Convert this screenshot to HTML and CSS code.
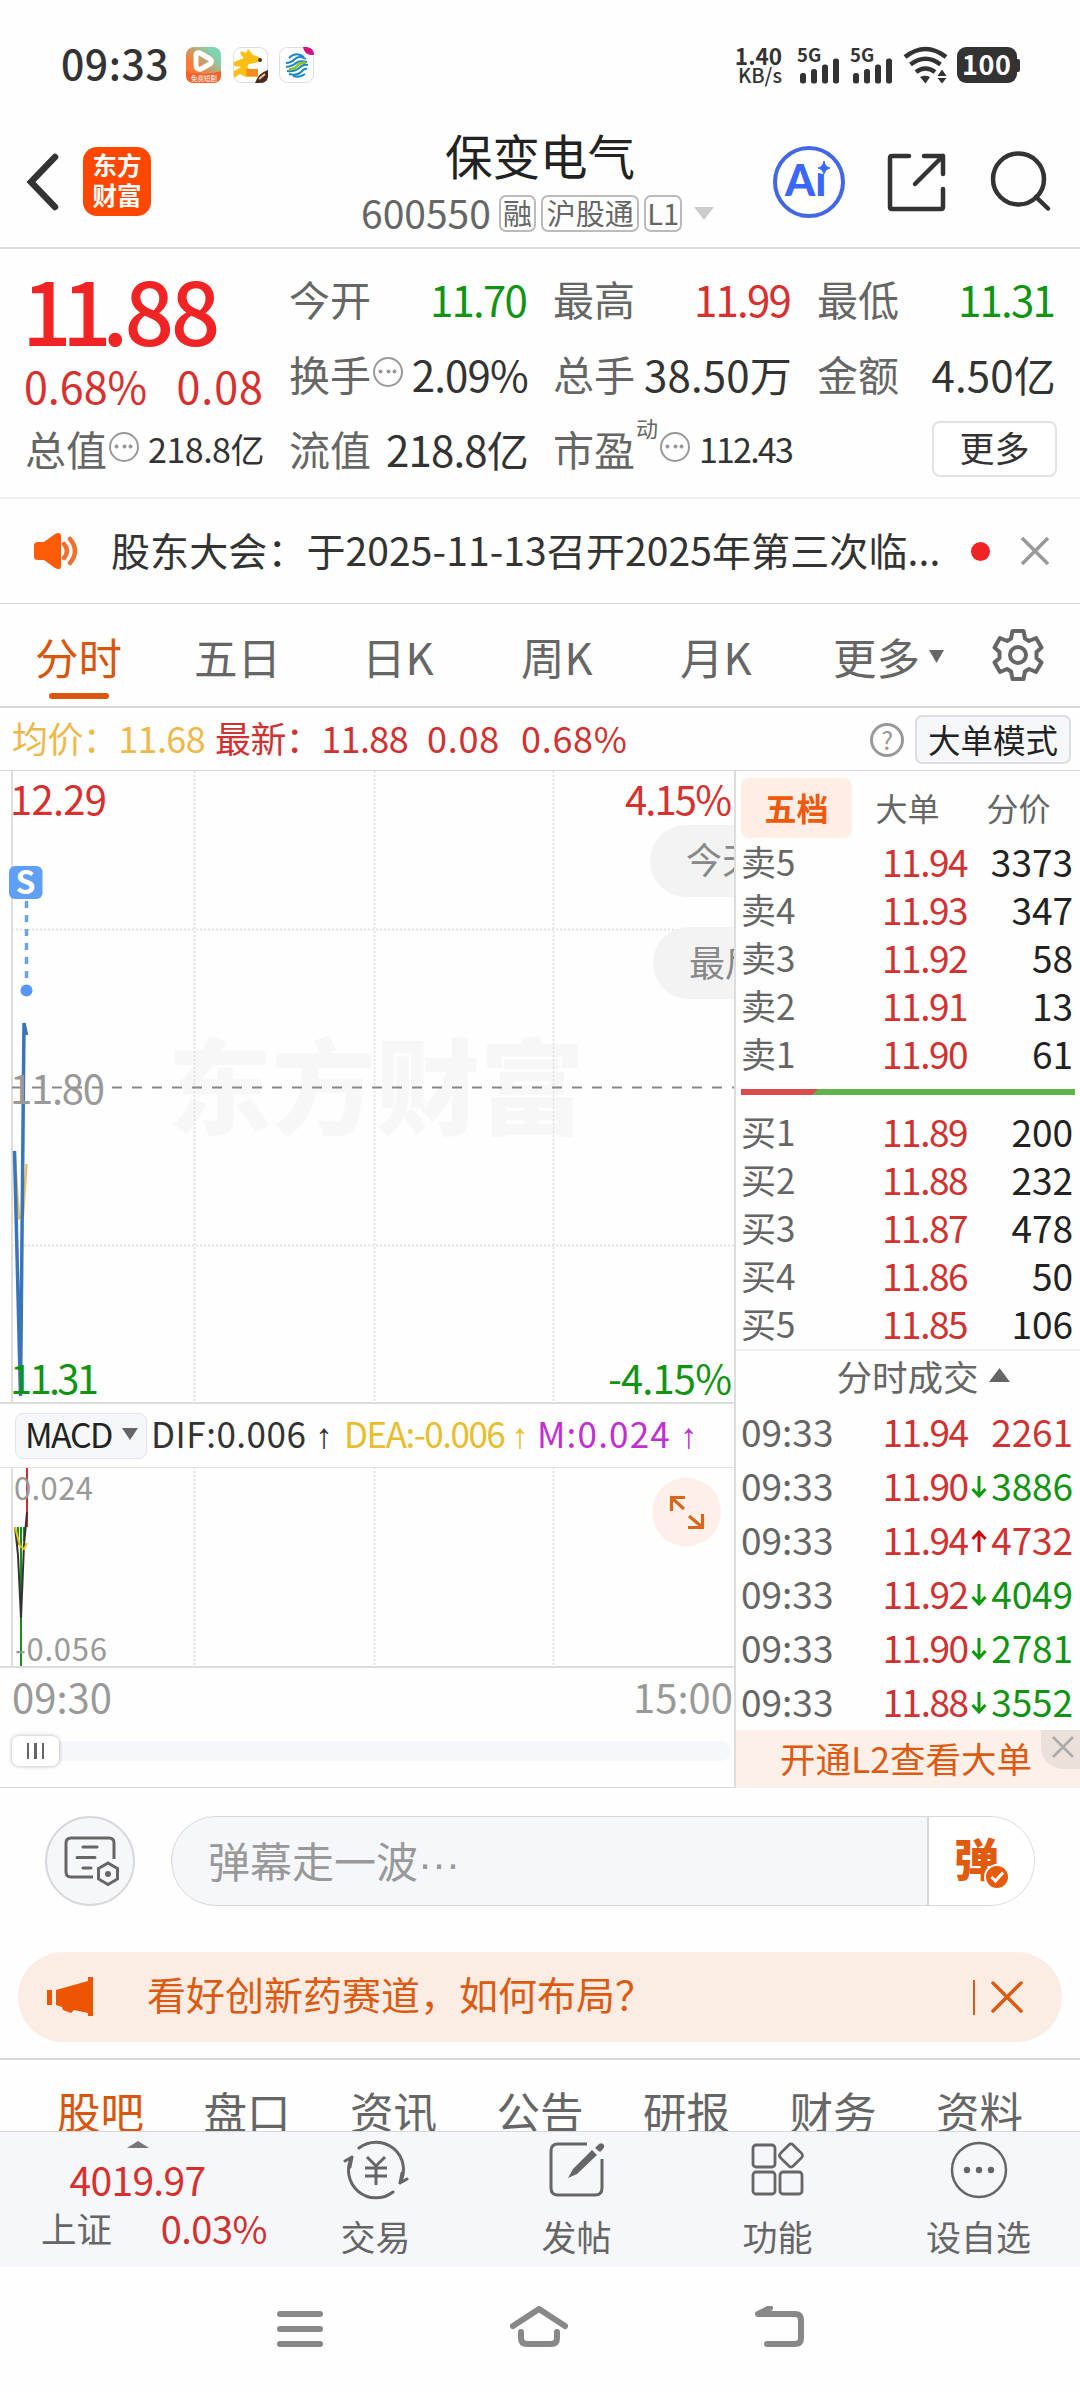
FILE: index.html
```html
<!DOCTYPE html>
<html lang="zh-CN">
<head>
    <meta charset="UTF-8">
    <meta name="viewport" content="width=device-width, initial-scale=1.0">
    <title>保变电气 600550</title>
    <link rel="stylesheet" href="styles.css">
</head>
<body>
    <!-- Status bar -->
    <div class="status">
        <span class="clock">09:33</span>
        <svg class="apps" width="130" height="36" viewBox="0 0 130 36">
            <defs>
                <linearGradient id="play" x1="0" y1="1" x2="1" y2="0">
                    <stop offset="0.35" stop-color="#fb7a35"/>
                    <stop offset="0.8" stop-color="#7fd3b0"/>
                </linearGradient>
            </defs>
            <rect x="0" y="0" width="35" height="36" rx="8" fill="url(#play)"/>
            <path d="M0 24Q17 30 35 24V28Q35 36 27 36H8Q0 36 0 28Z" fill="#f4622c"/>
            <path d="M10 8Q10 5 14 6L24 12Q27 14 24 17L15 22Q11 23 10 19Z" fill="none" stroke="#fff" stroke-width="5" stroke-linejoin="round"/>
            <text x="5" y="34" font-size="6.500" fill="#fff">免费短剧</text>
            <rect x="47.500" y="0.500" width="34" height="35" rx="8" fill="#fff" stroke="#ddd"/>
            <path d="M48 15L58 11Q53 7 55 4L60 6 62 2 67 8 73 10 75 14 69 16 63 17Q60 20 63 22H72V30H60L54 27 48 31V24L55 20 48 19Z" fill="#fbbf14"/>
            <path d="M60 22H72V29H61Z" fill="#f58a1f"/>
            <circle cx="74" cy="13" r="2" fill="#432"/>
            <path d="M69 36Q72 26 82 23V30Q81 36 74 36Z" fill="#4a2a1c"/>
            <path d="M73 32L79 27" stroke="#e8c9a0" stroke-width="2"/>
            <rect x="93.500" y="0.500" width="34" height="35" rx="8" fill="#fff" stroke="#ddd"/>
            <g fill="none" stroke="#1c86c8" stroke-width="2">
                <path d="M103 11Q110 4 118 10M100 16Q105 16 109 12T120 12M100 20Q107 19 110 16T121 15"/>
                <path d="M101 24Q109 25 113 21T122 18M103 27Q111 29 115 25T121 22M107 29Q114 31 119 27"/>
            </g>
            <path d="M103 22Q108 23 111 19T120 16" fill="none" stroke="#8ec31f" stroke-width="2.500"/>
            <path d="M117 0H121Q128 1 128 8H125Q118 7 117 0Z" fill="#d4117e"/>
        </svg>
        <div class="status-right">
            <div class="speed"><b>1.40</b><span>KB/s</span></div>
            <svg class="signals" width="224" height="40" viewBox="797 45 224 40">
                <g fill="#333">
                    <text x="797" y="61.500" font-size="18.500" font-weight="700">5G</text>
                    <rect x="800" y="73" width="6" height="10.500" rx="2.500"/>
                    <rect x="811" y="69" width="6" height="14.500" rx="2.500"/>
                    <rect x="822" y="64.500" width="6" height="19" rx="2.500"/>
                    <rect x="833" y="58.500" width="6" height="25" rx="2.500"/>
                    <text x="850" y="61.500" font-size="18.500" font-weight="700">5G</text>
                    <rect x="853" y="73" width="6" height="10.500" rx="2.500"/>
                    <rect x="864" y="69" width="6" height="14.500" rx="2.500"/>
                    <rect x="875" y="64.500" width="6" height="19" rx="2.500"/>
                    <rect x="886" y="58.500" width="6" height="25" rx="2.500"/>
                    <path d="M920 77Q925 74.500 930 77L925.500 83.500Z"/>
                    <path d="M937.500 76L942 69.500 946.500 76ZM937.500 78H946.500L942 83.500Z"/>
                    <rect x="957" y="47" width="60" height="36" rx="9"/>
                    <rect x="1015" y="59" width="5" height="13" rx="2"/>
                </g>
                <path d="M905 57Q925.500 41 946 57M910.500 64.500Q925.500 53 940.500 64.500M916 72Q925.500 65 935 72" fill="none" stroke="#333" stroke-width="4.500"/>
                <text x="962" y="75" font-size="27" font-weight="700" fill="#fff" textLength="49">100</text>
            </svg>
        </div>
    </div>

    <!-- Title bar -->
    <header class="header">
        <svg class="back" width="34" height="58" viewBox="0 0 34 58"><path d="M29 4L5 29 29 54" fill="none" stroke="#333" stroke-width="6.500" stroke-linecap="round"/></svg>
        <div class="logo"><span>东方</span><span>财富</span></div>
        <div class="title">
            <h1>保变电气</h1>
            <div class="code">
                <span class="code-num">600550</span>
                <span class="tag">融</span>
                <span class="tag tag-wide">沪股通</span>
                <span class="tag">L1</span>
                <svg width="22" height="15" viewBox="0 0 22 15"><path d="M1 1H21L11 14Z" fill="#ccc"/></svg>
            </div>
        </div>
        <svg class="actions" width="280" height="74" viewBox="772 145 280 74">
            <circle cx="809" cy="182" r="34" fill="#fff" stroke="#4468e4" stroke-width="4"/>
            <text class="ai" x="785" y="196">Ai</text>
            <circle cx="823" cy="167" r="7" fill="#fff"/>
            <path d="M824 161Q825 167 830 168 825 169 824 174 823 169 818 168 823 167 824 161Z" fill="#3a66fa" stroke="#3a66fa"/>
            <g fill="none" stroke="#333" stroke-width="4.500" stroke-linecap="round" stroke-linejoin="round">
                <path d="M909 156H892Q890 156 890 158V207Q890 209 892 209H941Q943 209 943 207V189"/>
                <path d="M924 156H943V174M943 156L915 184"/>
                <circle cx="1018.500" cy="179" r="25.500"/>
                <path d="M1036 197L1048 208.500"/>
            </g>
        </svg>
    </header>

    <!-- Quote -->
    <section class="quote">
        <div class="last">
            <div class="last-price"><span>11</span>.88</div>
            <div class="last-change"><span>0.68%</span><span>0.08</span></div>
        </div>
        <div class="cell"><label>今开</label><b class="green tight">11.70</b></div>
        <div class="cell"><label>最高</label><b class="red tight">11.99</b></div>
        <div class="cell"><label>最低</label><b class="green tight">11.31</b></div>
        <div class="cell"><label>换手<i class="dots"></i></label><b class="rate">2.09%</b></div>
        <div class="cell"><label>总手</label><b>38.50万</b></div>
        <div class="cell"><label>金额</label><b>4.50亿</b></div>
        <div class="cell"><label>总值<i class="dots"></i></label><b class="small">218.8亿</b></div>
        <div class="cell"><label>流值</label><b class="rate">218.8亿</b></div>
        <div class="cell"><label>市盈<sup>动</sup><i class="dots"></i></label><b class="small pe">112.43</b></div>
        <div class="cell cell-more"><button class="more">更多</button></div>
    </section>

    <!-- Notice -->
    <section class="notice">
        <svg width="46" height="38" viewBox="0 0 46 38">
            <path d="M1 13Q1 10 5 10H11L22 2Q28 -1 28 4V34Q28 39 22 36L11 28H5Q1 28 1 25Z" fill="#ff5a05"/>
            <path d="M31 12Q37 19 31 26M37 7Q47 19 37 31" fill="none" stroke="#f2702d" stroke-width="4.500" stroke-linecap="round"/>
        </svg>
        <p>股东大会：于2025-11-13召开2025年第三次临...</p>
        <i class="red-dot"></i>
        <svg width="30" height="30" viewBox="0 0 30 30"><path d="M2 2L28 28M28 2L2 28" stroke="#999" stroke-width="3.500"/></svg>
    </section>

    <!-- Period tabs -->
    <nav class="periods">
        <a class="active">分时</a>
        <a class="five">五日</a>
        <a>日K</a>
        <a>周K</a>
        <a class="month">月K</a>
        <a>更多<svg width="15" height="13" viewBox="0 0 15 13"><path d="M0 0H15L7.500 13Z" fill="#666"/></svg></a>
        <svg class="gear" width="52" height="54" viewBox="-26 -27 52 54">
            <path d="M-5.500 -24H5.500L7 -16.500 11 -14 18 -17 23.500 -7.500 18.500 -3V3L23.500 7.500 18 17 11 14 7 16.500 5.500 24H-5.500L-7 16.500 -11 14 -18 17 -23.500 7.500 -18.500 3V-3L-23.500 -7.500 -18 -17 -11 -14 -7 -16.500Z" fill="none" stroke="#666" stroke-width="4" stroke-linejoin="round"/>
            <circle r="8" fill="none" stroke="#666" stroke-width="4"/>
        </svg>
    </nav>

    <section class="summary">
        <span class="avg">均价：<b>11.68</b></span>
        <span class="now">最新：<b>11.88</b></span>
        <span class="now delta">0.08</span>
        <span class="now pct">0.68%</span>
        <span class="help">?</span>
        <button class="big-order">大单模式</button>
    </section>

    <main class="board">
        <!-- Charts -->
        <div class="charts">
            <svg class="chart" width="734" height="631" viewBox="0 771 734 631">
                <text class="watermark" x="168" y="1127" textLength="416">东方财富</text>
                <g class="grid">
                    <path d="M194.500 771V1402M374.500 771V1402M553.500 771V1402M12 929.500H734M12 1245.500H734"/>
                </g>
                <path d="M12 770V1403" stroke="#ddd" stroke-width="2"/>
                <g fill="#f3f3f3">
                    <rect x="650" y="825" width="160" height="72" rx="36"/>
                    <rect x="653" y="927" width="160" height="72" rx="36"/>
                </g>
                <g font-size="36" fill="#888">
                    <text x="686" y="874">今天</text>
                    <text x="689" y="977">最后</text>
                </g>
                <path d="M12 1087.500H734" stroke="#888" stroke-width="2" stroke-dasharray="10 10"/>
                <path d="M14.500 1151L19 1218 23 1215 26.500 1164" fill="none" stroke="#efc05a" stroke-width="2.500"/>
                <path d="M14.500 1151L20.500 1396 24 1023 26.500 1035" fill="none" stroke="#3b75b9" stroke-width="3.500"/>
                <rect x="9" y="866" width="33.500" height="33" rx="6" fill="#5f9ff6"/>
                <text x="25.500" y="893.500" font-size="32" font-weight="700" fill="#fff" text-anchor="middle">S</text>
                <path d="M26.500 901V990" stroke="#6ba3e8" stroke-width="3.500" stroke-dasharray="7 7"/>
                <circle cx="26.500" cy="990.500" r="6" fill="#5696f5"/>
                <g font-size="40">
                    <text x="10" y="814.500" fill="#d8302f" textLength="97">12.29</text>
                    <text x="732" y="814.500" fill="#d8302f" text-anchor="end" textLength="107">4.15%</text>
                    <text x="10" y="1103.500" fill="#999" textLength="95">11.80</text>
                    <text x="10" y="1393.500" fill="#119413" textLength="89">11.31</text>
                    <text x="732" y="1393.500" fill="#119413" text-anchor="end" textLength="124">-4.15%</text>
                </g>
            </svg>
            <div class="macd-bar">
                <span class="macd-pick">MACD <svg width="16" height="12" viewBox="0 0 16 12"><path d="M0 0H16L8 12Z" fill="#666"/></svg></span>
                <span class="dif">DIF:0.006<i>↑</i></span>
                <span class="dea">DEA:-0.006<i>↑</i></span>
                <span class="m">M:0.024<i>↑</i></span>
            </div>
            <svg class="chart macd" width="734" height="198" viewBox="0 1468 734 198">
                <g class="grid"><path d="M194.500 1467V1667M374.500 1467V1667M553.500 1467V1667"/></g>
                <path d="M12 1467V1668" stroke="#ddd" stroke-width="2"/>
                <path d="M18 1527V1545M21 1527V1667M24 1527V1541" stroke="#1a8f1e" stroke-width="2"/>
                <path d="M27 1467V1527" stroke="#cf2e2e" stroke-width="2"/>
                <path d="M15 1527L18 1555 21 1618 24 1545 27 1512" fill="none" stroke="#333" stroke-width="2"/>
                <path d="M15 1527L20 1546 24 1549 27 1543" fill="none" stroke="#e8c21d" stroke-width="2"/>
                <circle cx="686.500" cy="1512" r="34.500" fill="#fef0e8"/>
                <path d="M671.500 1511V1497.500H685M672 1498L684 1509M702.500 1514V1527.500H688M702 1527L689 1516" fill="none" stroke="#d9661f" stroke-width="3.200"/>
                <g font-size="31" fill="#999">
                    <text x="14" y="1499.500" textLength="79">0.024</text>
                    <text x="15" y="1661" textLength="92">-0.056</text>
                </g>
            </svg>
            <div class="axis"><span>09:30</span><span>15:00</span></div>
            <div class="slider"><div class="handle"><i></i><i></i><i></i></div></div>
        </div>

        <!-- Order book -->
        <aside class="book">
            <div class="book-tabs"><span class="active">五档</span><span>大单</span><span>分价</span></div>
            <div class="level"><span>卖5</span><b>11.94</b><em>3373</em></div>
            <div class="level"><span>卖4</span><b>11.93</b><em>347</em></div>
            <div class="level"><span>卖3</span><b>11.92</b><em>58</em></div>
            <div class="level"><span>卖2</span><b>11.91</b><em>13</em></div>
            <div class="level"><span>卖1</span><b>11.90</b><em>61</em></div>
            <div class="ratio"></div>
            <div class="level"><span>买1</span><b>11.89</b><em>200</em></div>
            <div class="level"><span>买2</span><b>11.88</b><em>232</em></div>
            <div class="level"><span>买3</span><b>11.87</b><em>478</em></div>
            <div class="level"><span>买4</span><b>11.86</b><em>50</em></div>
            <div class="level"><span>买5</span><b>11.85</b><em>106</em></div>
            <div class="deals-title">分时成交<svg width="21" height="14" viewBox="0 0 21 14"><path d="M0 14L10.500 0 21 14Z" fill="#666"/></svg></div>
            <div class="deal up"><span>09:33</span><b>11.94</b><i></i><em>2261</em></div>
            <div class="deal down"><span>09:33</span><b>11.90</b><i><svg width="16" height="22" viewBox="0 0 16 22"><path d="M8 0V20M1.500 13L8 20 14.500 13" fill="none" stroke="#0a9a0a" stroke-width="3"/></svg></i><em>3886</em></div>
            <div class="deal up"><span>09:33</span><b>11.94</b><i><svg width="16" height="22" viewBox="0 0 16 22"><path d="M8 22V2M1.500 9L8 2 14.500 9" fill="none" stroke="#cc0a0a" stroke-width="3"/></svg></i><em>4732</em></div>
            <div class="deal down"><span>09:33</span><b>11.92</b><i><svg width="16" height="22" viewBox="0 0 16 22"><path d="M8 0V20M1.500 13L8 20 14.500 13" fill="none" stroke="#0a9a0a" stroke-width="3"/></svg></i><em>4049</em></div>
            <div class="deal down"><span>09:33</span><b>11.90</b><i><svg width="16" height="22" viewBox="0 0 16 22"><path d="M8 0V20M1.500 13L8 20 14.500 13" fill="none" stroke="#0a9a0a" stroke-width="3"/></svg></i><em>2781</em></div>
            <div class="deal down"><span>09:33</span><b>11.88</b><i><svg width="16" height="22" viewBox="0 0 16 22"><path d="M8 0V20M1.500 13L8 20 14.500 13" fill="none" stroke="#0a9a0a" stroke-width="3"/></svg></i><em>3552</em></div>
            <div class="l2">开通L2查看大单
                <span class="l2-close"><svg width="22" height="22" viewBox="0 0 22 22"><path d="M1 1L21 21M21 1L1 21" stroke="#aaa" stroke-width="2.500"/></svg></span>
            </div>
        </aside>
    </main>

    <!-- Comment bar -->
    <section class="comment">
        <div class="comment-set">
            <svg width="58" height="52" viewBox="61 1837 58 52">
                <g fill="none" stroke="#666" stroke-width="3">
                    <path d="M114 1861V1845Q114 1840 109 1840H71Q66 1840 66 1845V1874Q66 1879 71 1879H93"/>
                    <path d="M83 1849H97M77 1859.500H95M83 1870H91" stroke-linecap="round"/>
                    <path d="M108 1865L117.500 1870.500V1881L108 1886.500 98.500 1881V1870.500Z"/>
                </g>
                <circle cx="108" cy="1876" r="3" fill="#666"/>
            </svg>
        </div>
        <div class="comment-input">
            <span class="placeholder">弹幕走一波<i>···</i></span>
            <div class="danmu">弹
                <svg class="danmu-on" width="26" height="26" viewBox="-13 -13 26 26"><circle r="12" fill="#e85a0c" stroke="#fff" stroke-width="2"/><path d="M-5.500 0L-1.500 4 6 -4.500" fill="none" stroke="#fff" stroke-width="3"/></svg>
            </div>
        </div>
    </section>

    <section class="promo">
        <svg width="46" height="40" viewBox="0 0 46 40"><path d="M0 13H5V28H0ZM9 13L41 4V0H46V39H41V36L27 33 24 36 16 33 15 30 9 28Z" fill="#ee5500"/></svg>
        <p>看好创新药赛道，如何布局？</p>
        <i></i>
        <svg width="32" height="32" viewBox="0 0 32 32"><path d="M2 2L30 30M30 2L2 30" stroke="#dc5a12" stroke-width="3.500" stroke-linecap="round"/></svg>
    </section>

    <nav class="info-tabs">
        <a class="active">股吧</a><a>盘口</a><a>资讯</a><a>公告</a><a>研报</a><a>财务</a><a>资料</a>
    </nav>

    <!-- Bottom toolbar -->
    <footer class="toolbar">
        <div class="index">
            <svg width="22" height="7" viewBox="0 0 22 7"><path d="M0 7L11 0 22 7Z" fill="#777"/></svg>
            <div class="index-value">4019.97</div>
            <div class="index-row"><span>上证</span><b>0.03%</b></div>
        </div>
        <div class="tool">
            <svg width="66" height="60" viewBox="-33 -30 66 60">
                <g fill="none" stroke="#666" stroke-width="3">
                    <path d="M-17 -22A27.500 27.500 0 0 1 24 13M24 13L31 9M24 13L26 3M17 22A27.500 27.500 0 0 1 -24 -13M-24 -13L-31 -9M-24 -13L-26 -3" stroke-linecap="round"/>
                    <path d="M-9 -13L0 -4 9 -13M0 -4V15M-11 -2H11M-11 6H11"/>
                </g>
            </svg>
            <span>交易</span>
        </div>
        <div class="tool">
            <svg width="56" height="60" viewBox="0 0 56 60">
                <path d="M38 4H9Q2 4 2 11V48Q2 55 9 55H46Q53 55 53 48V19" fill="none" stroke="#666" stroke-width="3"/>
                <path d="M19 38L24 29 43 10 48 15 28 34ZM46 8L50 4Q53 2 55 5 56 7 54 9L51 12Z" fill="#666"/>
            </svg>
            <span>发帖</span>
        </div>
        <div class="tool">
            <svg width="54" height="60" viewBox="0 0 54 60">
                <g fill="none" stroke="#666" stroke-width="2.800">
                    <rect x="2" y="5" width="22" height="22" rx="3"/>
                    <rect x="2" y="32" width="22" height="22" rx="3"/>
                    <rect x="29" y="32" width="22" height="22" rx="3"/>
                    <rect x="31" y="6.500" width="18" height="18" rx="3" transform="rotate(45 40 15.500)"/>
                </g>
            </svg>
            <span>功能</span>
        </div>
        <div class="tool">
            <svg width="60" height="60" viewBox="-30 -30 60 60">
                <circle r="27" fill="none" stroke="#666" stroke-width="2.500"/>
                <g fill="#666"><circle cx="-12" r="3.200"/><circle r="3.200"/><circle cx="12" r="3.200"/></g>
            </svg>
            <span>设自选</span>
        </div>
    </footer>

    <!-- System navigation -->
    <div class="sysnav">
        <svg width="46" height="46" viewBox="0 0 46 46"><path d="M3 8H43M3 23H43M3 38H43" stroke="#888" stroke-width="6" stroke-linecap="round"/></svg>
        <svg width="58" height="46" viewBox="0 0 58 46"><path d="M3 20L29 3 55 20M11 26V32Q11 38 17 38H41Q47 38 47 32V26" fill="none" stroke="#888" stroke-width="6" stroke-linecap="round" stroke-linejoin="round"/></svg>
        <svg width="50" height="46" viewBox="0 0 50 46"><path d="M15 2L3 8H40Q46 8 46 14V32Q46 38 40 38H12" fill="none" stroke="#888" stroke-width="6" stroke-linecap="round" stroke-linejoin="round"/></svg>
    </div>
</body>
</html>
```

FILE: styles.css
```css
* {
    box-sizing: border-box;
}
body {
    margin: 0;
    width: 1080px;
    height: 2392px;
    overflow: hidden;
    background-color: #fefefe;
    color: #333;
    font-family: "Noto Sans CJK SC", sans-serif;
}
svg {
    display: block;
    flex: none;
}
b, em, i {
    font-weight: 400;
    font-style: normal;
}
button {
    font-family: inherit;
    padding: 0;
}
p {
    margin: 0;
}
.red {
    color: #d8302f;
}
.green {
    color: #119413;
}

/* status bar */
.status {
    display: flex;
    align-items: center;
    height: 130px;
    padding-left: 61px;
}
.clock {
    width: 125px;
    font-size: 41px;
    font-weight: 500;
    line-height: 60px;
    margin-top: -6px;
    letter-spacing: 0.5px;
}
.status-right {
    display: flex;
    align-items: center;
    margin-left: 420px;
}
.speed {
    display: flex;
    flex-direction: column;
    align-items: flex-end;
    width: 46px;
    margin-right: 15px;
    font-size: 20px;
    font-weight: 500;
    line-height: 19px;
    white-space: nowrap;
}
.speed b {
    font-size: 22.5px;
    font-weight: 700;
}

/* title bar */
.header {
    display: flex;
    align-items: center;
    height: 119px;
    padding: 0 28px 14px 26px;
    border-bottom: 2px solid #ddd;
}
.logo {
    display: flex;
    flex-direction: column;
    justify-content: center;
    align-items: center;
    width: 68px;
    height: 69px;
    margin-left: 23px;
    padding-bottom: 3px;
    border-radius: 14px;
    background-color: #ff4700;
    color: #fff;
    font-size: 24.5px;
    font-weight: 700;
    line-height: 30px;
}
.title {
    width: 354px;
    margin-left: 210px;
    margin-right: 57px;
    padding-top: 7px;
}
.title h1 {
    margin: 0;
    padding-left: 84px;
    font-size: 47.5px;
    font-weight: 400;
    line-height: 56px;
    color: #222;
}
.code {
    display: flex;
    align-items: center;
    height: 60px;
    gap: 5px;
    color: #666;
}
.code-num {
    width: 133px;
    font-size: 39px;
    line-height: 50px;
    margin-top: -3px;
}
.tag {
    display: flex;
    align-items: center;
    justify-content: center;
    width: 38px;
    height: 37px;
    padding-bottom: 2px;
    border: 2px solid #bbb;
    border-radius: 7px;
    font-size: 29px;
    line-height: 30px;
    white-space: nowrap;
}
.tag-wide {
    width: 98px;
}
.code svg {
    margin-left: 6px;
}
.ai {
    font-family: Lato, sans-serif;
    font-size: 43px;
    font-weight: 900;
    fill: #3a66fa;
}

/* quote */
.quote {
    display: grid;
    grid-template-columns: repeat(4, 237px);
    grid-template-rows: repeat(3, 75px);
    column-gap: 27px;
    height: 250px;
    padding: 12px 25px 0;
    border-bottom: 2px solid #eee;
}
.last {
    grid-row: 1 / 3;
    grid-column: 1;
}
.last-price {
    margin-left: -3px;
    font-size: 87px;
    font-weight: 500;
    line-height: 94px;
    letter-spacing: -3.5px;
    color: #f02424;
}
.last-price span {
    letter-spacing: -9.5px;
}
.last-change {
    display: flex;
    justify-content: space-between;
    margin-left: -1px;
    font-size: 43px;
    line-height: 60px;
    color: #d8302f;
}
.last-change span + span {
    letter-spacing: 1px;
    margin-right: -2px;
}
.cell {
    display: flex;
    align-items: center;
    justify-content: space-between;
    white-space: nowrap;
}
.cell label {
    display: flex;
    align-items: center;
    font-size: 41px;
    line-height: 75px;
    color: #666;
}
.cell b {
    margin-right: -2px;
    font-size: 42px;
    line-height: 75px;
    letter-spacing: 0.2px;
}
.cell b.tight {
    margin-right: 0;
    letter-spacing: -1.8px;
}
.cell b.rate {
    letter-spacing: -0.8px;
}
.cell b.small {
    font-size: 34px;
    letter-spacing: -0.5px;
}
.cell b.pe {
    letter-spacing: -1.8px;
}
.cell sup {
    width: 22px;
    margin: -44px 0 0 1px;
    font-size: 22px;
    line-height: 24px;
}
/* circled ellipsis after a label */
.dots {
    width: 30px;
    height: 30px;
    margin: -4px 0 0 2px;
    border: 2.5px solid #999;
    border-radius: 50%;
    background: radial-gradient(circle, #999 1.8px, transparent 2.3px) center / 7px 7px no-repeat,
        radial-gradient(circle, #999 1.8px, transparent 2.3px) 2px center / 7px 7px no-repeat,
        radial-gradient(circle, #999 1.8px, transparent 2.3px) 16px center / 7px 7px no-repeat;
}
.cell-more {
    justify-content: flex-end;
}
.more {
    width: 125px;
    height: 56px;
    margin-right: -3px;
    border: 2px solid #e2e2e2;
    border-radius: 8px;
    background-color: #fff;
    color: #333;
    font-size: 35px;
    line-height: 46px;
    padding-bottom: 4px;
}

/* notice */
.notice {
    display: flex;
    align-items: center;
    height: 105px;
    padding-left: 33px;
    border-bottom: 1px solid #d8d8d8;
}
.notice p {
    width: 860px;
    margin-left: 32px;
    font-size: 39px;
    line-height: 50px;
    letter-spacing: 0.1px;
    white-space: nowrap;
    margin-top: -5px;
}
.red-dot {
    width: 19px;
    height: 19px;
    border-radius: 50%;
    background-color: #f02424;
    margin-right: 30px;
}

/* period tabs */
.periods {
    display: flex;
    align-items: center;
    height: 104px;
    padding-left: 35px;
    border-bottom: 2px solid #d8d8d8;
    color: #666;
    font-size: 43.5px;
}
.periods a {
    display: flex;
    align-items: center;
    width: 159px;
    line-height: 102px;
    margin-top: 3px;
}
.periods .five {
    width: 168px;
}
.periods .month {
    width: 153px;
}
.periods a svg {
    margin-left: 9px;
}
.periods .active {
    position: relative;
    color: #d9560f;
}
.periods .active::after {
    content: "";
    position: absolute;
    left: 14px;
    bottom: 9px;
    width: 60px;
    height: 6px;
    border-radius: 3px;
    background-color: #dc560e;
}

/* price summary */
.summary {
    display: flex;
    align-items: center;
    height: 63px;
    padding-left: 12px;
    border-bottom: 1px solid #d8d8d8;
    font-size: 36px;
    line-height: 60px;
    white-space: nowrap;
}
.summary span {
    margin-top: -4px;
    letter-spacing: -0.6px;
}
.summary .avg {
    width: 203px;
    color: #edb94c;
}
.summary .now {
    width: 212px;
    color: #d03231;
}
.summary .delta {
    width: 94px;
    letter-spacing: 0.8px;
}
.summary .pct {
    width: 349px;
    letter-spacing: 0.7px;
}
.summary .help {
    width: 34px;
    height: 34px;
    margin-top: 1px;
    border: 3px solid #999;
    border-radius: 50%;
    color: #999;
    font-size: 25px;
    line-height: 26px;
    text-align: center;
}
.big-order {
    width: 156px;
    height: 49px;
    margin-left: 11px;
    border: 2px solid #dcdee2;
    border-radius: 7px;
    background-color: #f6f7fa;
    color: #222;
    font-size: 32.5px;
    line-height: 42px;
}

/* chart area */
.board {
    display: flex;
    height: 1017px;
    border-bottom: 1px solid #d8d8d8;
}
.charts {
    width: 734px;
}
.chart {
    box-sizing: content-box;
    border-bottom: 2px solid #ddd;
}
.watermark {
    font-size: 104px;
    font-weight: 900;
    fill: #f7f7f7;
}
.grid {
    fill: none;
    stroke: #ddd;
    stroke-width: 1.5;
    stroke-dasharray: 2 2;
}
.macd-bar {
    display: flex;
    align-items: center;
    height: 63px;
    padding-left: 15px;
    font-size: 35px;
    line-height: 60px;
    white-space: nowrap;
}
.macd-pick {
    display: flex;
    align-items: center;
    justify-content: space-between;
    width: 132px;
    height: 46px;
    padding: 0 8px 3px 9px;
    border: 1px solid #e2e4e8;
    border-radius: 8px;
    background-color: #f6f7fa;
    color: #222;
    font-size: 34px;
    letter-spacing: -1.5px;
}
.dif, .dea, .m {
    margin-top: -3px;
}
/* trend arrow, half an em wide in this face */
.macd-bar i {
    margin-left: 9px;
    font-family: "Liberation Sans", sans-serif;
}
.dif {
    width: 193px;
    margin-left: 4px;
    letter-spacing: 0.5px;
}
.dea {
    width: 193px;
    color: #e8bd2e;
    letter-spacing: -1.5px;
}
.dea i {
    margin-left: 7px;
}
.m {
    color: #c22fd0;
    letter-spacing: 1.2px;
}
.macd {
    border-top: 1px solid #e2e2e2;
}
.axis {
    display: flex;
    justify-content: space-between;
    padding: 0 1px 0 12px;
    color: #999;
    font-size: 40px;
    line-height: 56px;
}
.slider {
    height: 20px;
    margin: 17px 3px 0 12px;
    border-radius: 10px;
    background-color: #f6f7fa;
}
.handle {
    position: relative;
    top: -5px;
    display: flex;
    align-items: center;
    justify-content: center;
    gap: 5px;
    width: 47px;
    height: 30px;
    border-radius: 7px;
    background-color: #fff;
    box-shadow: 0 0 4px rgba(0, 0, 0, 0.3);
}
.handle i {
    width: 2.5px;
    height: 16px;
    background-color: #666;
}

/* order book */
.book {
    width: 346px;
    border-left: 2px solid #ddd;
    color: #666;
}
.book-tabs {
    display: flex;
    height: 68px;
    padding: 7px 0 0 5px;
    font-size: 32px;
}
.book-tabs span {
    width: 111px;
    height: 60px;
    line-height: 58px;
    text-align: center;
}
.book-tabs .active {
    border-radius: 8px;
    background-color: #ffeee6;
    color: #f0590c;
    font-weight: 700;
}
.level, .deal {
    display: flex;
    height: 48px;
    padding: 0 7px 0 5px;
    font-size: 37px;
    line-height: 44px;
}
.level span {
    width: 101px;
    font-size: 35px;
}
.level b {
    width: 125px;
    text-align: right;
    letter-spacing: -1.5px;
    color: #d03231;
}
.level em {
    flex: 1;
    text-align: right;
    color: #222;
}
.ratio {
    height: 6px;
    margin: 10px 5px 14px;
    background: linear-gradient(135deg, #dc4b4b 54px, #60b34b 55px);
}
.deals-title {
    display: flex;
    align-items: center;
    justify-content: center;
    gap: 10px;
    height: 57px;
    padding-left: 30px;
    padding-bottom: 5px;
    border-top: 2px solid #eee;
    font-size: 35.5px;
    line-height: 50px;
}
.deals-title svg {
    margin-top: -2px;
}
.deal {
    height: 54px;
    line-height: 50px;
}
.deal span {
    width: 97px;
}
.deal b {
    width: 132px;
    text-align: right;
    letter-spacing: -1.5px;
    color: #d03231;
}
.deal i {
    display: flex;
    align-items: center;
    justify-content: center;
    width: 24px;
    height: 54px;
}
.deal em {
    flex: 1;
    text-align: right;
    letter-spacing: -0.1px;
}
.up em {
    color: #d03231;
}
.down em {
    color: #119413;
}
.l2 {
    position: relative;
    height: 58px;
    background-color: #fdf0e9;
    color: #dc5a12;
    font-size: 35.5px;
    line-height: 56px;
    padding-left: 44px;
}
.l2-close {
    position: absolute;
    top: 0;
    right: 0;
    display: flex;
    align-items: center;
    justify-content: center;
    width: 39px;
    height: 39px;
    padding: 0 0 6px 4px;
    border-bottom-left-radius: 22px;
    background-color: #ebe0da;
}

/* comment bar */
.comment {
    display: flex;
    height: 164px;
    padding: 28px 45px 0;
}
.comment-set {
    display: flex;
    align-items: center;
    justify-content: center;
    width: 90px;
    height: 90px;
    border: 2px solid #d6d8dc;
    border-radius: 50%;
    background-color: #f6f7fa;
}
.comment-input {
    display: flex;
    flex: 1;
    height: 90px;
    margin-left: 36px;
    border: 1.5px solid #d6d8dc;
    border-radius: 45px;
    background-color: #f6f7fa;
    overflow: hidden;
    color: #999;
    font-size: 42px;
    line-height: 86px;
}
.placeholder {
    width: 755px;
    padding-left: 36px;
}
.placeholder i {
    font-family: "Liberation Sans", sans-serif;
}
.danmu {
    position: relative;
    flex: 1;
    padding-left: 25px;
    border-left: 2px solid #d6d8dc;
    background-color: #fff;
    color: #e05a10;
    font-size: 45px;
    font-weight: 900;
    line-height: 82px;
}
.danmu-on {
    position: absolute;
    left: 55px;
    top: 47px;
}

/* promo */
.promo {
    display: flex;
    align-items: center;
    height: 90px;
    margin: 0 18px 16px;
    padding-left: 29px;
    border-radius: 45px;
    background-color: #fcede4;
    color: #dc5a12;
}
.promo p {
    width: 826px;
    margin: -8px 0 0 54px;
    font-size: 39px;
    line-height: 60px;
}
.promo i {
    width: 1.5px;
    height: 35px;
    margin-right: 16px;
    background-color: #dc5a12;
}

.info-tabs {
    display: flex;
    justify-content: space-between;
    height: 73px;
    padding: 15px 57px 0;
    border-top: 2px solid #d8d8d8;
    overflow: hidden;
    color: #666;
    font-size: 43.5px;
    line-height: 72px;
}
.info-tabs .active {
    color: #d9560f;
}

/* bottom toolbar */
.toolbar {
    display: flex;
    height: 136px;
    border-top: 1px solid #d6d8dc;
    background-color: #f6f7fa;
    color: #666;
}
.index {
    width: 275px;
    padding-top: 9px;
}
.index svg {
    margin-left: 127px;
}
.index-value {
    width: 275px;
    font-size: 39px;
    line-height: 54px;
    text-align: center;
    color: #d8302f;
    margin-top: 4px;
    letter-spacing: -0.7px;
}
.index-row {
    display: flex;
    justify-content: space-between;
    padding: 0 8px 0 41px;
    font-size: 35.5px;
    line-height: 44px;
}
.index-row b {
    font-size: 38px;
    letter-spacing: -0.5px;
    color: #d03231;
}
.tool {
    display: flex;
    flex-direction: column;
    align-items: center;
    width: 201px;
    padding-top: 8px;
    font-size: 35px;
    line-height: 40px;
}
.tool span {
    margin-top: 16px;
}

/* system navigation */
.sysnav {
    display: flex;
    gap: 187px;
    padding: 39px 0 0 277px;
}
```
